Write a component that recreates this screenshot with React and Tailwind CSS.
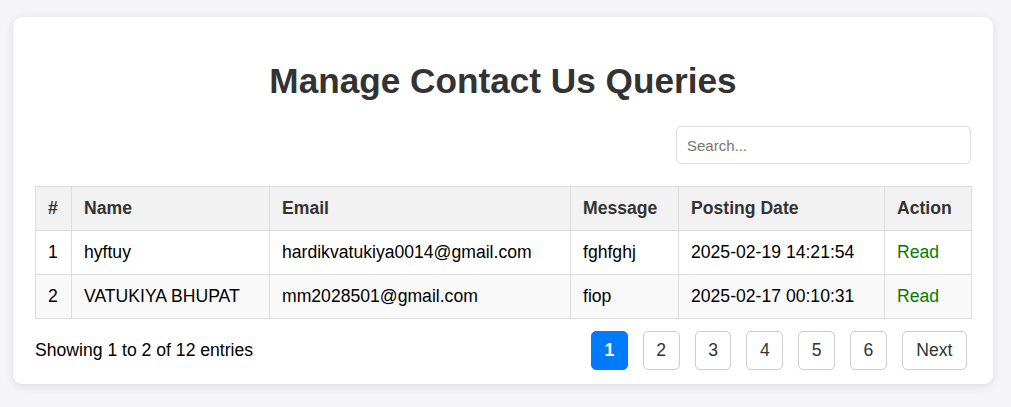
import React, { useState } from "react";

const queries = [
  {
    id: 1,
    name: "hyftuy",
    email: "hardikvatukiya0014@gmail.com",
    message: "fghfghj",
    date: "2025-02-19 14:21:54",
  },
  {
    id: 2,
    name: "VATUKIYA BHUPAT",
    email: "mm2028501@gmail.com",
    message: "fiop",
    date: "2025-02-17 00:10:31",
  },
];

const columns = [
  { label: "#", width: "w-[36px]" },
  { label: "Name", width: "w-[198px]" },
  { label: "Email", width: "w-[301px]" },
  { label: "Message", width: "w-[108px]" },
  { label: "Posting Date", width: "w-[206px]" },
  { label: "Action", width: "w-[87px]" },
];

const App = () => {
  const [search, setSearch] = useState("");
  const [page, setPage] = useState(1);

  const cell = "border border-[#ddd] h-[44px] px-[12px] pt-0 pb-[2px] text-left align-middle";

  return (
    <div className="min-h-screen bg-[#f4f4f9] pt-[17px] pl-[13px] font-['Liberation_Sans',Arial,sans-serif]">
      <div className="w-[980px] bg-white rounded-[9px] shadow-[0_2px_10px_rgba(0,0,0,0.1)] px-[22px] pt-[43px] pb-[14px]">
        <h1 className="text-center text-[35.2px] leading-[41px] font-bold text-[#333] mb-[25px]">
          Manage Contact Us Queries
        </h1>

        <div className="flex justify-end mb-[22px]">
          <input
            type="text"
            value={search}
            onChange={(e) => setSearch(e.target.value)}
            placeholder="Search..."
            className="w-[295px] h-[38px] border border-[#ddd] rounded-[5px] px-[10px] text-[15px] text-[#333] placeholder:text-[#777] outline-none"
          />
        </div>

        <table className="w-[936px] border-collapse table-fixed text-[17.6px] leading-[20px]">
          <thead>
            <tr className="bg-[#f2f2f2]">
              {columns.map((col) => (
                <th key={col.label} className={`${cell} ${col.width} font-bold text-[#333]`}>
                  {col.label}
                </th>
              ))}
            </tr>
          </thead>
          <tbody>
            {queries.map((q, i) => (
              <tr key={q.id} className={i % 2 === 1 ? "bg-[#f9f9f9]" : "bg-white"}>
                <td className={`${cell} text-black`}>{q.id}</td>
                <td className={`${cell} text-black`}>{q.name}</td>
                <td className={`${cell} text-black`}>{q.email}</td>
                <td className={`${cell} text-black`}>{q.message}</td>
                <td className={`${cell} text-black`}>{q.date}</td>
                <td className={`${cell} text-[#008000]`}>Read</td>
              </tr>
            ))}
          </tbody>
        </table>

        <div className="flex items-center justify-between mt-[12px]">
          <span className="text-[17.6px] text-black">Showing 1 to 2 of 12 entries</span>
          <div className="flex items-center gap-[15px] mr-[4px]">
            {[1, 2, 3, 4, 5, 6].map((n) => (
              <button
                key={n}
                onClick={() => setPage(n)}
                className={`h-[39px] px-[12.5px] rounded-[5px] border text-[17.6px] ${
                  page === n
                    ? "bg-[#007bff] border-[#007bff] text-white font-bold"
                    : "bg-white border-[#ccc] text-[#333]"
                }`}
              >
                {n}
              </button>
            ))}
            <button
              onClick={() => setPage(Math.min(page + 1, 6))}
              className="h-[39px] px-[13.5px] rounded-[5px] border border-[#ccc] bg-white text-[17.6px] text-[#333]"
            >
              Next
            </button>
          </div>
        </div>
      </div>
    </div>
  );
};

export default App;
